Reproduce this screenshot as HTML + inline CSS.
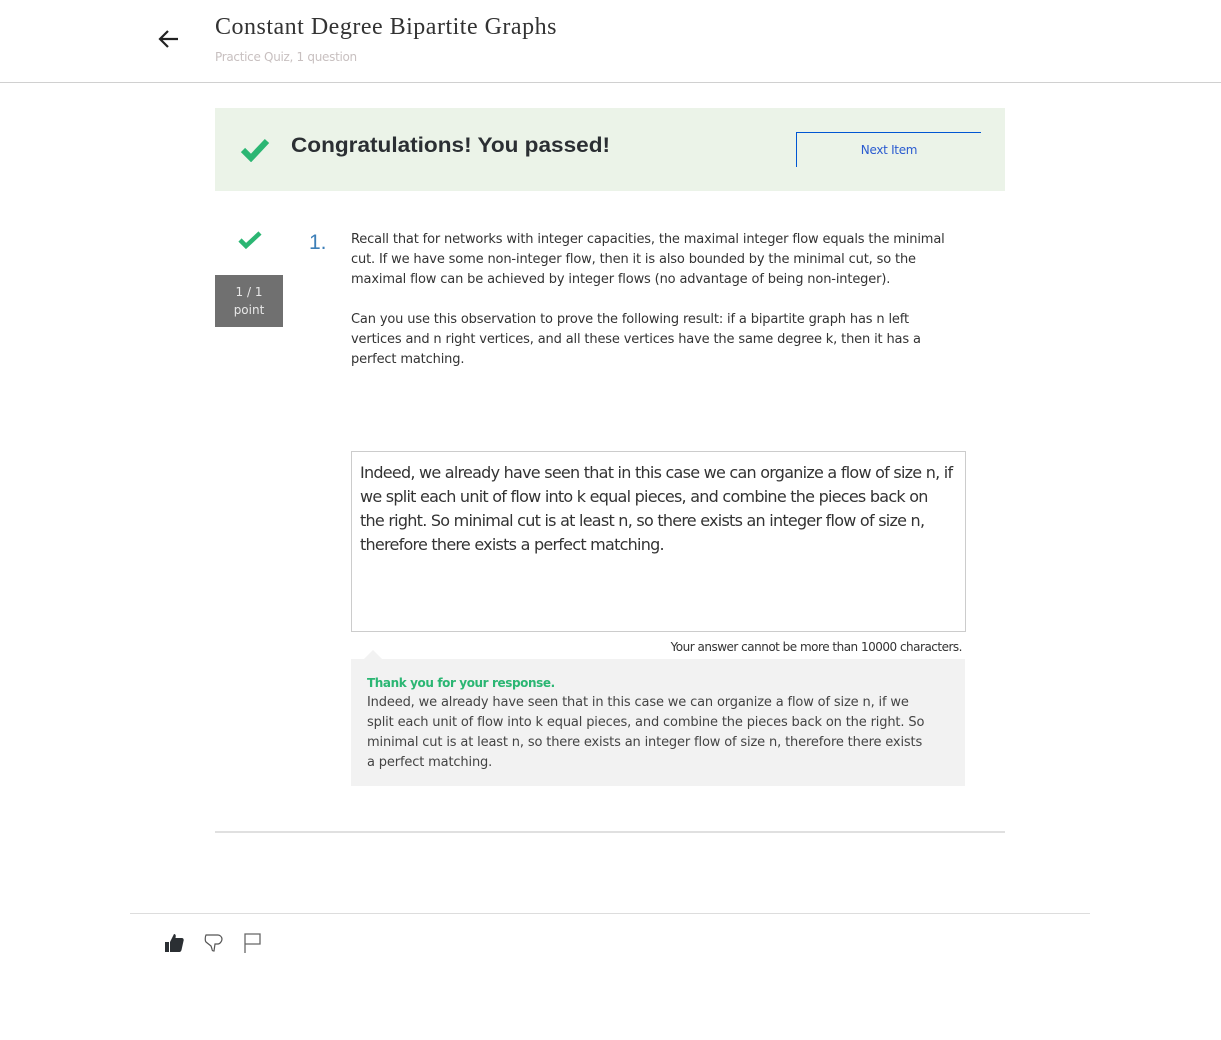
<!DOCTYPE html>
<html><head><meta charset="utf-8"><style>
*{box-sizing:border-box;margin:0;padding:0}
body{width:1221px;height:1040px;background:#fff;font-family:"DejaVu Sans","Liberation Sans",sans-serif;color:#333;position:relative;overflow:hidden}
.abs{position:absolute}
.q{font-size:13px;line-height:20px;color:#333;letter-spacing:-0.15px;white-space:nowrap}
</style></head><body>
<svg class="abs" style="left:157px;top:28px" width="24" height="22" viewBox="0 0 24 22"><path d="M21 11H3M11 3L3 11l8 8" fill="none" stroke="#222" stroke-width="2.2"/></svg>
<div class="abs" style="left:215px;top:14px;font-family:'Liberation Serif',serif;font-size:24px;color:#333;letter-spacing:0.5px">Constant Degree Bipartite Graphs</div>
<div class="abs" style="left:215px;top:50px;font-size:12px;color:#c8c0c0;letter-spacing:-0.3px">Practice Quiz, 1 question</div>
<div class="abs" style="left:0;top:82px;width:1221px;height:1px;background:#d0d0d0"></div>
<div class="abs" style="left:215px;top:108px;width:790px;height:83px;background:#ebf3e8"></div>
<svg class="abs" style="left:240px;top:138px" width="30" height="24" viewBox="0 0 30 24"><path d="M3 12l8 8L27 3" fill="none" stroke="#2bb673" stroke-width="6"/></svg>
<div class="abs" style="left:291px;top:134px;font-size:21px;font-weight:bold;color:#2b2f33;font-family:'Liberation Sans',sans-serif;transform:scaleX(1.075);transform-origin:left">Congratulations! You passed!</div>
<div class="abs" style="left:796px;top:132px;width:185px;height:35px;border-top:1px solid #0056d2;border-left:1px solid #0056d2;font-size:12px;color:#2a5bd0;text-align:center;line-height:34px;letter-spacing:-0.3px">Next Item</div>
<svg class="abs" style="left:238px;top:231px" width="24" height="18" viewBox="0 0 24 18"><path d="M2 9l6 6L22 2" fill="none" stroke="#2bb673" stroke-width="4.5"/></svg>
<div class="abs" style="left:215px;top:275px;width:68px;height:52px;background:#707070;color:#e8e8e8;font-size:12px;text-align:center;line-height:18px;padding-top:8px">1 / 1<br>point</div>
<div class="abs" style="left:309px;top:231px;font-size:21px;color:#3d7fb8;font-family:'Liberation Sans',sans-serif">1.</div>
<div class="abs q" style="left:351px;top:230px">Recall that for networks with integer capacities, the maximal integer flow equals the minimal<br>cut. If we have some non-integer flow, then it is also bounded by the minimal cut, so the<br>maximal flow can be achieved by integer flows (no advantage of being non-integer).<br><br>Can you use this observation to prove the following result: if a bipartite graph has n left<br>vertices and n right vertices, and all these vertices have the same degree k, then it has a<br>perfect matching.</div>
<div class="abs" style="left:351px;top:451px;width:615px;height:181px;border:1px solid #ccc;padding:9px 8px;font-size:16px;line-height:24px;color:#333;letter-spacing:-0.75px;white-space:nowrap">Indeed, we already have seen that in this case we can organize a flow of size n, if<br>we split each unit of flow into k equal pieces, and combine the pieces back on<br>the right. So minimal cut is at least n, so there exists an integer flow of size n,<br>therefore there exists a perfect matching.</div>
<div class="abs" style="left:500px;top:640px;width:462px;text-align:right;font-size:12px;color:#333;letter-spacing:-0.5px">Your answer cannot be more than 10000 characters.</div>
<div class="abs" style="left:364px;top:650px;width:0;height:0;border-left:9px solid transparent;border-right:9px solid transparent;border-bottom:9px solid #f2f2f2"></div>
<div class="abs q" style="left:351px;top:659px;width:614px;height:127px;background:#f2f2f2;padding:14px 16px;line-height:20px;color:#444"><div style="color:#2bb673;font-weight:bold;font-size:12px;letter-spacing:-0.4px">Thank you for your response.</div>Indeed, we already have seen that in this case we can organize a flow of size n, if we<br>split each unit of flow into k equal pieces, and combine the pieces back on the right. So<br>minimal cut is at least n, so there exists an integer flow of size n, therefore there exists<br>a perfect matching.</div>
<div class="abs" style="left:215px;top:831px;width:790px;height:2px;background:#e0e0e0"></div>
<div class="abs" style="left:130px;top:913px;width:960px;height:1px;background:#ddd"></div>
<svg class="abs" style="left:163px;top:932px" width="22" height="22" viewBox="0 0 22 22"><path d="M2 10h4v10H2zM7 10l4-8c2 0 2 2 1.5 4H19c1.5 0 2 2 1.5 3l-2 9c-.3 1-1 2-2 2H7z" fill="#2b2f33"/></svg>
<svg class="abs" style="left:203px;top:932px" width="22" height="22" viewBox="0 0 22 22"><path d="M3 3h12c2 0 4 2 4 4s-2 5-4 5h-3l-1 7c-1 0-2 0-2-2l-1-3-5-4C2 9 2 5 3 3z" fill="none" stroke="#555" stroke-width="1.2"/></svg>
<svg class="abs" style="left:243px;top:932px" width="20" height="22" viewBox="0 0 20 22"><path d="M2 21V2h15v10H2" fill="none" stroke="#666" stroke-width="1.3"/></svg>
</body></html>
